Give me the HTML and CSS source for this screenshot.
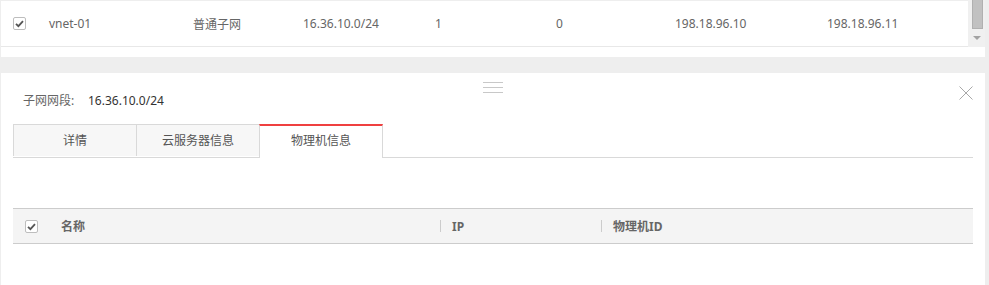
FILE: index.html
```html
<!DOCTYPE html>
<html>
<head>
<meta charset="utf-8">
<link rel="stylesheet" href="styles.css">
</head>
<body>
<div class="top-panel">
  <div class="top-main">
    <div class="row">
      <div class="cell c-check"><span class="checkbox"><svg viewBox="0 0 13 13" width="13" height="13"><path d="M3 6.8 L5.4 9.2 L10 4.2" fill="none" stroke="#555" stroke-width="1.8"/></svg></span></div>
      <div class="cell c-name">vnet-01</div>
      <div class="cell c-type">普通子网</div>
      <div class="cell c-cidr">16.36.10.0/24</div>
      <div class="cell c-n1">1</div>
      <div class="cell c-n2">0</div>
      <div class="cell c-ip1">198.18.96.10</div>
      <div class="cell c-ip2">198.18.96.11</div>
    </div>
    <div class="row-gap"></div>
  </div>
  <div class="scrollbar">
    <div class="thumb"></div>
    <div class="arrow"></div>
  </div>
</div>
<div class="band"></div>
<div class="detail">
  <div class="grip"><span></span><span></span><span></span></div>
  <div class="close"><svg viewBox="0 0 14 14" width="14" height="14"><path d="M0.5 0.5 L13.5 13.5 M13.5 0.5 L0.5 13.5" stroke="#a8a8a8" stroke-width="1" fill="none"/></svg></div>
  <div class="info"><span class="info-label">子网网段:</span><span class="info-value">16.36.10.0/24</span></div>
  <div class="tabs">
    <div class="tab">详情</div>
    <div class="tab">云服务器信息</div>
    <div class="tab active">物理机信息</div>
  </div>
  <div class="thead">
    <div class="th th-check"><span class="checkbox"><svg viewBox="0 0 13 13" width="13" height="13"><path d="M3 6.8 L5.4 9.2 L10 4.2" fill="none" stroke="#555" stroke-width="1.8"/></svg></span></div>
    <div class="th th-name">名称</div>
    <div class="th th-ip"><span class="sep"></span>IP</div>
    <div class="th th-id"><span class="sep"></span>物理机ID</div>
  </div>
</div>
</body>
</html>
```
FILE: styles.css
```css
html, body {
  margin: 0;
  padding: 0;
}
body {
  background: #eeeeee;
  font-family: "Noto Sans", "Noto Sans CJK SC", sans-serif;
  font-size: 12px;
  color: #666;
  padding-top: 1px;
  padding-left: 1px;
  width: 984px;
  height: 284px;
  overflow: hidden;
}
.top-panel {
  display: flex;
  background: #fff;
  margin-top: -1px;
}
.top-main {
  flex: 1;
  display: flex;
  flex-direction: column;
  border-top: 1px solid #eeeeee;
}
.row {
  display: flex;
  align-items: center;
  height: 45px;
  border-bottom: 1px solid #e8e8e8;
  margin-right: -17px;
  padding-right: 17px;
}
.cell {
  flex: none;
  white-space: nowrap;
}
.c-check { width: 36px; padding-left: 12px; display: flex; align-items: center; }
.c-name { width: 144px; }
.c-type { width: 110px; }
.c-cidr { width: 132px; }
.c-n1 { width: 121px; }
.c-n2 { width: 119px; }
.c-ip1 { width: 152px; }
.c-ip2 { width: 120px; }
.row-gap {
  height: 10px;
  margin-right: -17px;
  background: #fff;
  position: relative;
}
.checkbox {
  display: inline-flex;
  width: 13px;
  height: 13px;
  box-sizing: border-box;
  border: 1px solid #bdbdbd;
  border-radius: 2px;
  background: #fff;
  align-items: center;
  justify-content: center;
}
.checkbox svg { margin: -1px; }
.scrollbar {
  width: 17px;
  height: 47px;
  background: #f0f0f0;
  display: flex;
  flex-direction: column;
  align-items: center;
  position: relative;
  z-index: 1;
}
.thumb {
  width: 11px;
  height: 29px;
  margin-left: 1px;
  background: #c1c1c1;
  border: 1px solid #b0b0b0;
  border-top: none;
  box-sizing: border-box;
}
.arrow {
  margin-top: 7px;
  margin-left: 1px;
  width: 0;
  height: 0;
  border-left: 4px solid transparent;
  border-right: 4px solid transparent;
  border-top: 4px solid #a3a3a3;
}
.band {
  height: 16px;
}
.detail {
  background: #fff;
  position: relative;
  padding: 18px 12px 0 12px;
  height: 194px;
  overflow: hidden;
}
.grip {
  position: absolute;
  left: 482px;
  top: 9px;
  width: 20px;
  display: flex;
  flex-direction: column;
  gap: 4px;
}
.grip span {
  display: block;
  height: 1px;
  background: #c8c8c8;
}
.close {
  position: absolute;
  right: 12px;
  top: 13px;
  width: 14px;
  height: 14px;
}
.close svg { display: block; }
.info {
  height: 20px;
  line-height: 20px;
  padding-left: 10px;
  display: flex;
}
.info-label {
  color: #666;
  width: 65px;
}
.info-value {
  color: #333;
}
.tabs {
  margin-top: 13px;
  display: flex;
  border-bottom: 1px solid #d9d9d9;
}
.tab {
  width: 122px;
  height: 31px;
  border: 1px solid #d9d9d9;
  border-bottom: none;
  border-right: none;
  background: #f7f7f7;
  color: #555;
  text-align: center;
  line-height: 32px;
}
.tab.active {
  background: #fff;
  border-top: 2px solid #ef4040;
  border-right: 1px solid #d9d9d9;
  height: 31px;
  line-height: 30px;
  margin-bottom: -1px;
  padding-bottom: 1px;
}
.thead {
  margin-top: 50px;
  display: flex;
  align-items: center;
  height: 34px;
  background: #f4f4f4;
  border-top: 1px solid #cccccc;
  border-bottom: 1px solid #cccccc;
  font-weight: bold;
  color: #666;
}
.th { flex: none; display: flex; align-items: center; }
.th-check { width: 36px; padding-left: 12px; }
.th-name { width: 379px; }
.th-ip { width: 161px; }
.th-id { flex: 1; }
.sep {
  display: inline-block;
  width: 1px;
  height: 12px;
  background: #cccccc;
  margin-right: 11px;
}
```
